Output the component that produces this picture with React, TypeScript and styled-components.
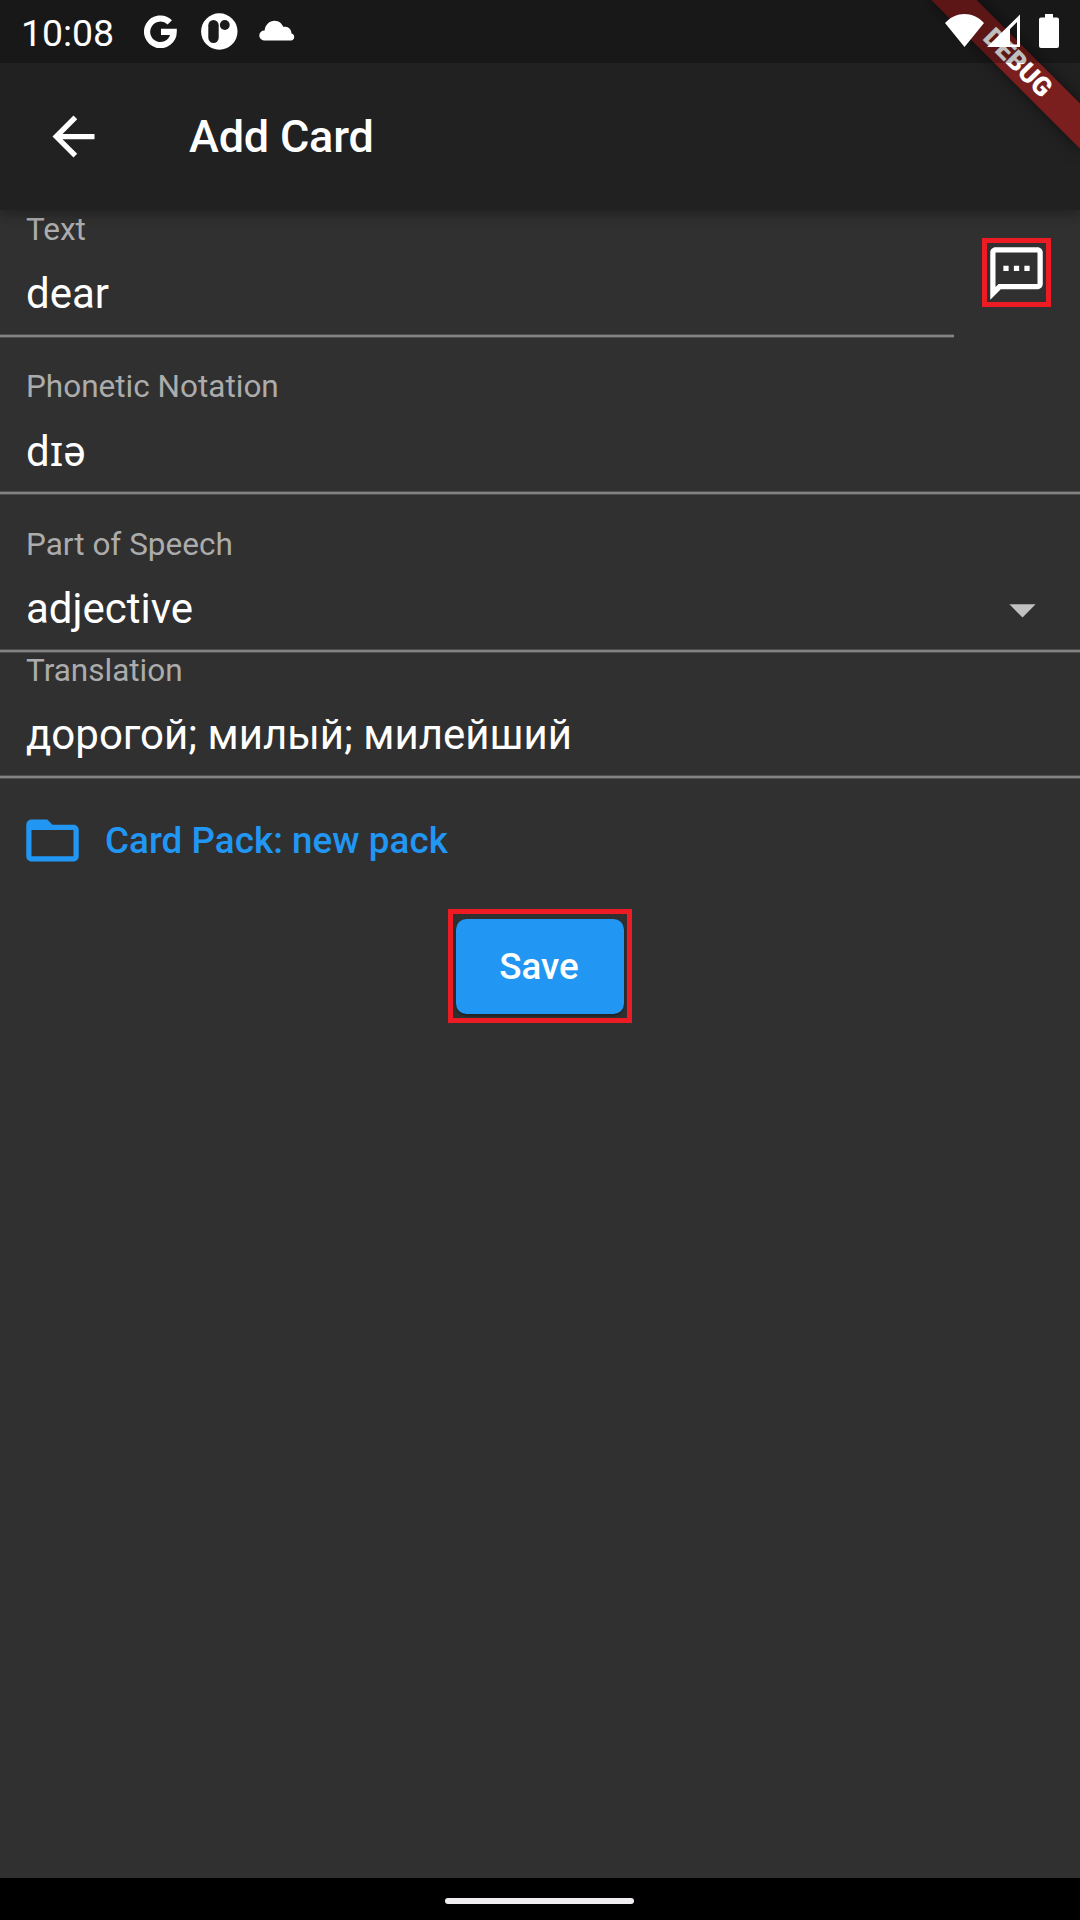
import React from 'react';
import styled, { createGlobalStyle } from 'styled-components';
import { MdArrowBack, MdArrowDropDown, MdFolderOpen, MdOutlineSms } from 'react-icons/md';

const GlobalStyle = createGlobalStyle`
  * { box-sizing: border-box; }
  body { margin: 0; background: #303030; }
`;

const Screen = styled.div`
  position: relative;
  display: flex;
  flex-direction: column;
  width: 1080px;
  height: 1920px;
  overflow: hidden;
  background: #303030;
  color: #fff;
  font-family: Roboto, 'Noto Sans', sans-serif;
`;

const StatusBar = styled.header`
  position: relative;
  z-index: 3;
  display: flex;
  align-items: flex-start;
  flex: 0 0 63px;
  padding: 0 21px 0 21px;
  background: rgba(0, 0, 0, 0.25);
`;

const Clock = styled.span`
  width: 123px;
  margin-top: 11px;
  font-size: 37.4px;
  line-height: 44px;
  white-space: nowrap;
`;

const StatusIcon = styled.svg<{ $left?: string; $top: number }>`
  display: block;
  flex: none;
  margin-left: ${({ $left }) => $left ?? '0'};
  margin-top: ${({ $top }) => $top}px;
`;

const AppBar = styled.div`
  position: relative;
  z-index: 1;
  display: flex;
  align-items: center;
  flex: 0 0 210px;
  margin-top: -63px;
  padding: 63px 42px 0;
  background: #212121;
  box-shadow: 0 5px 10px rgba(0, 0, 0, 0.2), 0 2px 14px rgba(0, 0, 0, 0.12);
`;

const IconButton = styled.button`
  display: flex;
  padding: 0;
  border: 0;
  background: none;
  color: #fff;
`;

const Title = styled.h1`
  margin: 0 0 0 84px;
  font-size: 45px;
  font-weight: 500;
  line-height: 54px;
  letter-spacing: -0.2px;
`;

const DebugBanner = styled.div`
  position: absolute;
  z-index: 2;
  left: 912px;
  top: 47.4px;
  width: 210px;
  height: 31.5px;
  padding-left: 1px;
  transform: rotate(45deg);
  background: rgba(183, 28, 28, 0.6);
  box-shadow: 0 0 16px rgba(0, 0, 0, 0.5);
  font-size: 26.4px;
  font-weight: 900;
  line-height: 31.5px;
  text-align: center;
`;

const Form = styled.main`
  display: flex;
  flex-direction: column;
  flex: 1;
`;

const TextRow = styled.div`
  display: flex;
  justify-content: space-between;
  padding-right: 29px;
`;

const Field = styled.div<{ $height: number; $width?: string }>`
  display: flex;
  flex-direction: column;
  justify-content: flex-end;
  width: ${({ $width }) => $width ?? '100%'};
  height: ${({ $height }) => $height}px;
`;

const Label = styled.label`
  flex: none;
  padding-left: 26px;
  color: #acacac;
  font-size: 31.5px;
  line-height: 38px;
`;

const Value = styled.div<{ $drop: number }>`
  display: flex;
  flex: none;
  align-items: center;
  justify-content: space-between;
  height: 50px;
  margin: ${({ $drop }) => `${20 + $drop}px 26px ${15 - $drop}px`};
  font-size: 42px;
  line-height: 50px;
  svg { color: #c1c1c1; }
`;

const Underline = styled.div`
  flex: none;
  height: 4px;
  background: linear-gradient(#4f4f4f 1px, #838383 1px, #838383 3px, #4f4f4f 3px);
`;

const Highlight = styled.div<{ $w: number; $h: number; $top: number }>`
  display: flex;
  align-items: center;
  justify-content: center;
  width: ${({ $w }) => $w}px;
  height: ${({ $h }) => $h}px;
  margin-top: ${({ $top }) => $top}px;
  border: 5px solid #ed1c24;
  svg { flex: none; }
`;

const MessageButton = styled(IconButton)`
  padding: 1px 0 0 0.5px;
`;

const PackButton = styled.button`
  display: flex;
  align-items: center;
  height: 63px;
  margin-top: 30px;
  padding: 0 21px;
  gap: 21px;
  border: 0;
  background: none;
  color: #2196f3;
  font: 500 36.75px/44px Roboto, sans-serif;
  letter-spacing: 0.05px;
`;

const SaveButton = styled.button`
  flex: none;
  width: 168px;
  height: 95px;
  padding: 2px 2px 0 0;
  border: 0;
  border-radius: 10.5px;
  background: #2196f3;
  box-shadow: 0 2px 3px rgba(0, 0, 0, 0.3);
  color: #fff;
  font: 500 36.75px/44px Roboto, sans-serif;
`;

const SaveRow = styled.div`
  display: flex;
  justify-content: center;
`;

const NavBar = styled.nav`
  display: flex;
  justify-content: center;
  flex: 0 0 42px;
  padding: 20px 1px 0 0;
  background: #000;
`;

const HomePill = styled.div`
  width: 189px;
  height: 6px;
  border-radius: 3px;
  background: #efedf0;
`;

function FormField({ label, value, height, width, dropdown, drop = 0 }: {
  label: string; value: string; height: number; width?: string; dropdown?: boolean; drop?: number;
}) {
  return (
    <Field $height={height} $width={width}>
      <Label>{label}</Label>
      <Value $drop={drop}>
        <span>{value}</span>
        {dropdown && <MdArrowDropDown size={63} />}
      </Value>
      <Underline />
    </Field>
  );
}

export default function App() {
  return (
    <>
      <GlobalStyle />
      <Screen>
        <StatusBar>
          <Clock>10:08</Clock>
          <StatusIcon $top={15} width="33" height="33" viewBox="0 0 33 33">
            <path d="M25.8 7.4A13.3 13.3 0 1 0 29.7 16.8H17" fill="none" stroke="#fff" strokeWidth="6.2" />
          </StatusIcon>
          <StatusIcon $left="24px" $top={13} width="37" height="37" viewBox="0 0 37 37">
            <circle cx="18.3" cy="18.5" r="18.2" fill="#fff" />
            <rect x="7.3" y="7" width="10.4" height="23" rx="5.2" fill="#1a1a1a" />
            <circle cx="23.8" cy="12" r="4.9" fill="#1a1a1a" />
          </StatusIcon>
          <StatusIcon $left="21px" $top={20} width="37" height="21" viewBox="0 0 37 21">
            <path d="M5 20.5A5 5 0 0 1 5.6 10.5C6.2 4.8 10.5 .7 15.5 .7C20 .7 22.9 3.5 24.4 7.1C29 5.8 32.5 9.5 32.5 13.5A3.6 3.6 0 0 1 32.4 20.5Z" fill="#fff" />
          </StatusIcon>
          <StatusIcon $left="auto" $top={14} width="39" height="33" viewBox="0 0 39 33">
            <path d="M0 9C11-3 28-3 39 9L19.5 33Z" fill="#fff" />
          </StatusIcon>
          <StatusIcon $left="3px" $top={14} width="34" height="34" viewBox="0 0 34 34">
            <path fillRule="evenodd" d="M0 33L33 .5V33ZM23 30.500H30V8L23 15Z" fill="#fff" />
          </StatusIcon>
          <StatusIcon $left="18px" $top={14} width="20" height="34" viewBox="0 0 20 34">
            <path d="M6 0H14V3.500H18Q20 3.500 20 5.500V32Q20 34 18 34H2Q0 34 0 32V5.500Q0 3.500 2 3.500H6Z" fill="#fff" />
          </StatusIcon>
        </StatusBar>
        <AppBar>
          <IconButton aria-label="Back"><MdArrowBack size={63} /></IconButton>
          <Title>Add Card</Title>
        </AppBar>
        <DebugBanner>DEBUG</DebugBanner>
        <Form>
          <TextRow>
            <FormField label="Text" value="dear" height={128} width="954px" />
            <Highlight $w={69} $h={69} $top={28}>
              <MessageButton aria-label="Message"><MdOutlineSms size={63} /></MessageButton>
            </Highlight>
          </TextRow>
          <FormField label="Phonetic Notation" value="dɪə" height={157} drop={1} />
          <FormField label="Part of Speech" value="adjective" height={158} dropdown />
          <FormField label="Translation" value="дорогой; милый; милейший" height={126} />
          <PackButton><MdFolderOpen size={63} />Card Pack: new pack</PackButton>
          <SaveRow>
            <Highlight $w={184} $h={114} $top={37}>
              <SaveButton>Save</SaveButton>
            </Highlight>
          </SaveRow>
        </Form>
        <NavBar><HomePill /></NavBar>
      </Screen>
    </>
  );
}
